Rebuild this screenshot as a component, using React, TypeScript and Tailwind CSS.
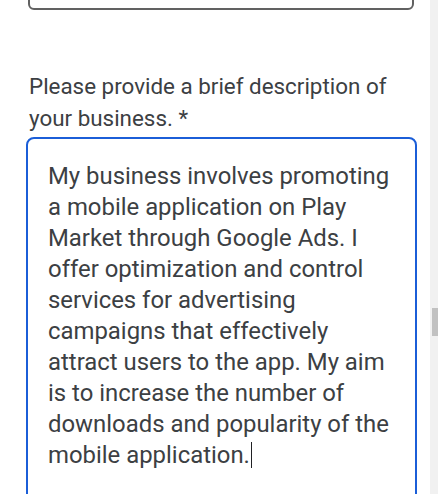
import React from "react";

const lines = [
  "My business involves promoting",
  "a mobile application on Play",
  "Market through Google Ads. I",
  "offer optimization and control",
  "services for advertising",
  "campaigns that effectively",
  "attract users to the app. My aim",
  "is to increase the number of",
  "downloads and popularity of the",
  "mobile application.",
];

export default function App() {
  return (
    <div className="flex h-[494px] w-[438px] overflow-hidden bg-white" style={{ fontFamily: "Roboto, 'Noto Sans', sans-serif" }}>
      <div className="flex-1 min-w-0">
        <div className="ml-[28px] mt-[-30px] h-[40px] w-[386px] rounded-md border-2 border-[#616161]" />
        <div className="ml-[29px] mt-[60px] text-[22.4px] leading-[32px] text-[#3c4043]">
          Please provide a brief description of
          <br />
          your business. *
        </div>
        <div className="ml-[26px] mt-[3px] h-[400px] w-[391px] rounded-lg border-2 border-[#1b5ed8] pl-[20px] pt-[22px] text-[23.9px] leading-[31px] text-[#3c4043]">
          {lines.map((l, i) => (
            <div key={i} className="h-[31px] whitespace-nowrap">
              {l}
              {i === lines.length - 1 && (
                <span className="ml-[1px] inline-block h-[26px] w-[1.5px] bg-[#202124] align-[-5px]" />
              )}
            </div>
          ))}
        </div>
      </div>
      <div className="flex w-[8px] shrink-0 flex-col bg-[#f1f1f1]">
        <div className="ml-[2px] mt-[308px] h-[28px] w-[6px] bg-[#c1c1c1]" />
      </div>
    </div>
  );
}
